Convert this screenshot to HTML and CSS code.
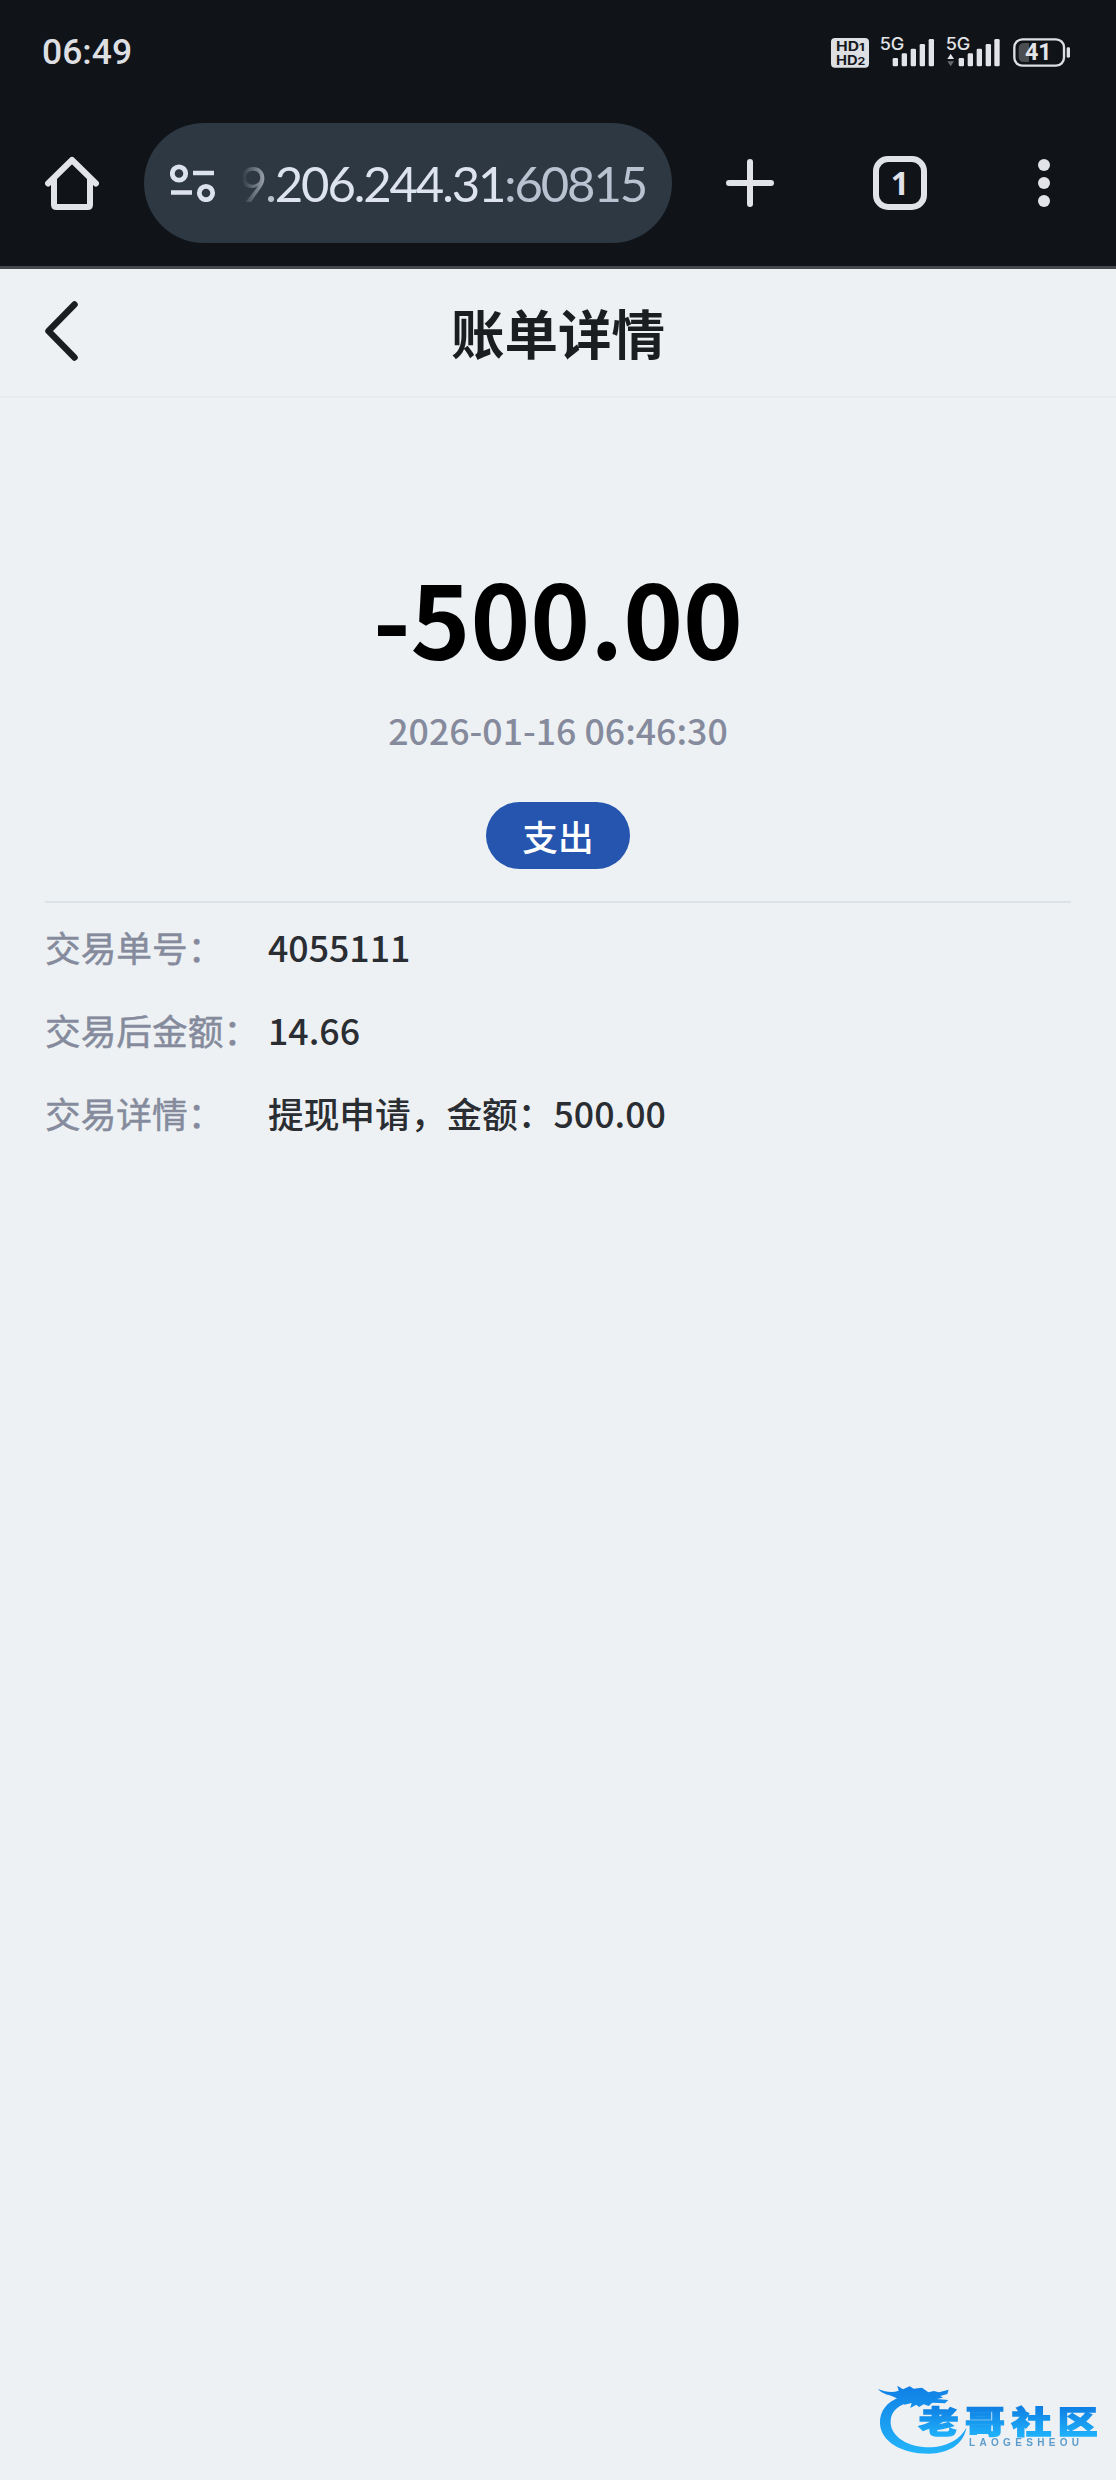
FILE: index.html
```html
<!DOCTYPE html>
<html lang="zh-CN">
<head>
    <meta charset="UTF-8">
    <meta name="viewport" content="width=device-width, initial-scale=1.0">
    <title>账单详情</title>
    <link rel="stylesheet" href="styles.css">
</head>
<body>
    <header class="browser">
        <div class="status-bar">
            <span class="clock">06:49</span>
            <div class="status-icons">
                <svg class="icon-hd" viewBox="60 42 114 102">
                    <rect x="60" y="51" width="114" height="89" rx="12" fill="#dddfe2"/>
                    <g class="hd-text">
                        <text x="75" y="91" textLength="86" lengthAdjust="spacingAndGlyphs">HD<tspan font-size="32">1</tspan></text>
                        <text x="75" y="131" textLength="88" lengthAdjust="spacingAndGlyphs">HD<tspan font-size="32">2</tspan></text>
                    </g>
                </svg>
                <svg class="icon-signal" viewBox="208 42 162 102">
                    <text class="net-text" x="207" y="87" textLength="74" lengthAdjust="spacingAndGlyphs">5G</text>
                    <g fill="#e3e4e7">
                        <rect x="246" y="111" width="16" height="25" rx="4"/>
                        <rect x="273" y="97" width="16" height="39" rx="4"/>
                        <rect x="300" y="83" width="16" height="53" rx="4"/>
                        <rect x="327" y="69" width="16" height="67" rx="4"/>
                        <rect x="354" y="54" width="16" height="82" rx="4"/>
                    </g>
                </svg>
                <svg class="icon-signal" viewBox="406 42 162 102">
                    <text class="net-text" x="405" y="87" textLength="74" lengthAdjust="spacingAndGlyphs">5G</text>
                    <path d="M410 114l10-16 10 16z" fill="#e3e4e7"/>
                    <path d="M410 121l10 15 10-15z" fill="#66696d"/>
                    <g fill="#e3e4e7">
                        <rect x="444" y="111" width="16" height="25" rx="4"/>
                        <rect x="471" y="97" width="16" height="39" rx="4"/>
                        <rect x="498" y="83" width="16" height="53" rx="4"/>
                        <rect x="525" y="69" width="16" height="67" rx="4"/>
                        <rect x="551" y="54" width="16" height="82" rx="4"/>
                    </g>
                </svg>
                <svg class="icon-battery" viewBox="609 42 171 102">
                    <rect x="613" y="55" width="149" height="79" rx="24" fill="none" stroke="#dddfe2" stroke-width="7"/>
                    <path d="M642 66h15v57h-15q-16 0-16-16V82q0-16 16-16z" fill="#4b4d51"/>
                    <rect x="770" y="79" width="10" height="31" rx="4" fill="#dddfe2"/>
                    <text class="battery-text" x="645" y="117" textLength="80">41</text>
                </svg>
            </div>
        </div>

        <div class="toolbar">
            <svg class="icon-home" viewBox="0 0 54 54" fill="none" stroke="#e2e3e8" stroke-width="6" stroke-linejoin="round" stroke-linecap="round">
                <path d="M3 27.500 27 4l24 23.500"/>
                <path d="M9 23v25.500q0 2.500 2.500 2.500h31q2.500 0 2.500-2.500V23"/>
            </svg>
            <div class="omnibox">
                <svg class="icon-site" viewBox="0 0 46 38" fill="none" stroke="#dce3ef">
                    <circle cx="9" cy="9.500" r="6.700" stroke-width="4.800"/>
                    <circle cx="36" cy="29" r="6.700" stroke-width="4.800"/>
                    <path d="M23 9h21M1 28.500h21" stroke-width="4.700"/>
                </svg>
                <div class="url"><span class="url-cut">9</span><span class="url-dot">.</span>206.244.31<span class="url-port">:60815</span></div>
            </div>
            <svg class="icon-plus" viewBox="0 0 48 48" stroke="#e2e3e8" stroke-width="6" stroke-linecap="round">
                <path d="M24 3v42M3 24h42"/>
            </svg>
            <div class="tabs">1</div>
            <svg class="icon-more" viewBox="0 0 12 48" fill="#e2e3e8">
                <circle cx="6" cy="6" r="6"/>
                <circle cx="6" cy="24" r="6"/>
                <circle cx="6" cy="42" r="6"/>
            </svg>
        </div>
    </header>

    <nav class="navbar">
        <svg class="icon-back" viewBox="0 0 34 62" fill="none" stroke="#1b1e21" stroke-width="6.500" stroke-linecap="round" stroke-linejoin="round">
            <path d="M29.500 4.500 3.500 31l26 26.500"/>
        </svg>
        <h1 class="title">账单详情</h1>
    </nav>

    <main class="bill">
        <section class="summary">
            <div class="amount">-500.00</div>
            <div class="time">2026-01-16 06:46:30</div>
            <div class="tag">支出</div>
        </section>
        <dl class="details">
            <div class="row">
                <dt>交易单号：</dt>
                <dd>4055111</dd>
            </div>
            <div class="row">
                <dt>交易后金额：</dt>
                <dd>14.66</dd>
            </div>
            <div class="row">
                <dt>交易详情：</dt>
                <dd>提现申请，金额：500.00</dd>
            </div>
        </dl>
    </main>

    <!-- Community watermark -->
    <svg class="watermark" viewBox="0 0 750 330">
        <defs>
            <linearGradient id="wm-ring" x1="0" y1="50" x2="0" y2="250" gradientUnits="userSpaceOnUse">
                <stop offset="0" stop-color="#1080e6"/>
                <stop offset="1" stop-color="#22b4fa"/>
            </linearGradient>
            <linearGradient id="wm-text" x1="0" y1="-78" x2="0" y2="9" gradientUnits="userSpaceOnUse">
                <stop offset="0" stop-color="#0f7fe3"/>
                <stop offset="1" stop-color="#1fb0fa"/>
            </linearGradient>
        </defs>
        <g fill="url(#wm-ring)">
            <path d="M105 80C62 94 40 124 42 161c3 52 62 90 146 90 63-1 105-30 113-78-17 34-57 56-105 59-68 2-119-30-122-72-2-30 15-50 49-62z"/>
            <path d="M36 57c24 10 45 11 62 5l-4-15 17 11 20-9 12 7 25-3 19 14 17-4 15 4 29-8-4 13-21 6 8 5-18 4 34 3-10 10-38-2-11 10-15-5-14 8-8-7-18 10 4-15-22 5-10-13-21-10-15-6C66 75 46 69 36 57z"/>
        </g>
        <g class="wm-name" fill="url(#wm-text)" stroke="url(#wm-text)">
            <text transform="translate(158 188) scale(1.3 1)"><tspan x="0">老</tspan><tspan x="107">哥</tspan><tspan x="214">社</tspan><tspan x="321">区</tspan></text>
        </g>
        <text class="wm-latin" x="309" y="229" textLength="330">LAOGESHEOU</text>
    </svg>
</body>
</html>
```
FILE: styles.css
```css
:root {
    --chrome-bg: #101418;
    --chrome-fg: #e2e3e8;
    --omnibox-bg: #2d3843;
    --page-bg: #edf1f4;
    --text-dark: #1b1e21;
    --text-muted: #858b9c;
    --primary: #2555ae;
}

* {
    box-sizing: border-box;
}

body {
    margin: 0;
    min-height: 100vh;
    background: var(--page-bg);
    color: var(--text-dark);
    font-family: "Noto Sans CJK SC", sans-serif;
    font-weight: 500;
}

svg {
    display: block;
    flex: none;
}

/* Browser chrome */
.browser {
    height: 269px;
    background: var(--chrome-bg);
    border-bottom: 3px solid #45494f;
}

.status-bar {
    height: 103px;
    padding: 0 46px 0 42px;
    display: flex;
    align-items: center;
    justify-content: space-between;
}

.clock {
    font: 500 35.5px/36px Roboto, sans-serif;
    color: #dddfe2;
}

.status-icons {
    display: flex;
    gap: 11.5px;
}

.status-icons svg {
    height: 34px;
    overflow: visible;
}

.icon-hd {
    width: 38px;
}

.icon-signal {
    width: 54px;
}

.icon-battery {
    width: 57px;
    margin-left: 2px;
}

.hd-text {
    font: 700 38px Inter, sans-serif;
    fill: #15191d;
}

.net-text {
    font: 500 50px Inter, sans-serif;
    fill: #e3e4e7;
}

.battery-text {
    font: 700 70px Roboto, sans-serif;
    fill: #e3e4e7;
}

.toolbar {
    height: 160px;
    padding: 0 66px 0 45px;
    display: flex;
    align-items: center;
}

.icon-home {
    width: 54px;
    height: 54px;
}

.omnibox {
    width: 528px;
    height: 120px;
    margin-left: 45px;
    padding-left: 26px;
    display: flex;
    align-items: center;
    border-radius: 60px;
    background: var(--omnibox-bg);
}

.icon-site {
    width: 46px;
    height: 38px;
}

.url {
    margin-left: 23px;
    font: 400 49px/60px Lato, sans-serif;
    letter-spacing: -2.1px;
    white-space: nowrap;
    color: #dde4f0;
}

.url-cut {
    background: linear-gradient(90deg, var(--omnibox-bg) 10%, #9aa3ae);
    -webkit-background-clip: text;
    background-clip: text;
    color: transparent;
}

.url-dot {
    color: #b7bfca;
}

.url-port {
    color: #b9c2d0;
}

.icon-plus {
    width: 48px;
    height: 48px;
    margin-left: 54px;
}

.tabs {
    width: 54px;
    height: 54px;
    margin-left: 99px;
    border: 6px solid var(--chrome-fg);
    border-radius: 15px;
    font: 700 32px/42px "Open Sans", sans-serif;
    text-align: center;
    color: var(--chrome-fg);
}

.icon-more {
    width: 12px;
    height: 48px;
    margin-left: auto;
}

/* Page header */
.navbar {
    height: 129px;
    padding: 0 45px 4px;
    display: grid;
    grid-template-columns: 34px 1fr 34px;
    align-items: center;
    border-bottom: 2px solid #e8ecef;
}

.icon-back {
    width: 34px;
    height: 62px;
}

.title {
    margin: 2px 0 0;
    font-size: 53.5px;
    line-height: 80px;
    font-weight: 700;
    text-align: center;
}

/* Bill */
.bill {
    padding: 0 45px;
}

.summary {
    height: 505px;
    padding-top: 153px;
    display: flex;
    flex-direction: column;
    align-items: center;
    border-bottom: 2px solid #dde2e6;
}

.amount {
    font-size: 101.5px;
    line-height: 130px;
    font-weight: 700;
    color: #000;
}

.time {
    margin-top: 22px;
    font-size: 35.7px;
    line-height: 54px;
    color: var(--text-muted);
}

.tag {
    width: 144px;
    height: 67px;
    margin-top: 45px;
    border-radius: 34px;
    background: var(--primary);
    color: #fff;
    font-size: 35.7px;
    line-height: 67px;
    text-align: center;
}

.details {
    margin: 0;
    padding-top: 2px;
    font-size: 35.7px;
    line-height: 83px;
}

.row {
    display: flex;
}

.row dt {
    width: 223px;
    font-weight: 400;
    -webkit-text-stroke: 0.5px var(--text-muted);
    color: var(--text-muted);
}

.row dd {
    margin: 0;
    color: #2a2d31;
}

/* Sits over the page in the bottom right corner */
.watermark {
    position: fixed;
    right: 0;
    bottom: 0;
    width: 250px;
    height: 110px;
    filter: blur(0.6px);
}

.wm-name {
    font: 900 92px "Noto Sans CJK SC", sans-serif;
    stroke-width: 4;
}

.wm-latin {
    font: 700 30px "Liberation Sans", sans-serif;
    fill: #5d9ccb;
}
```
